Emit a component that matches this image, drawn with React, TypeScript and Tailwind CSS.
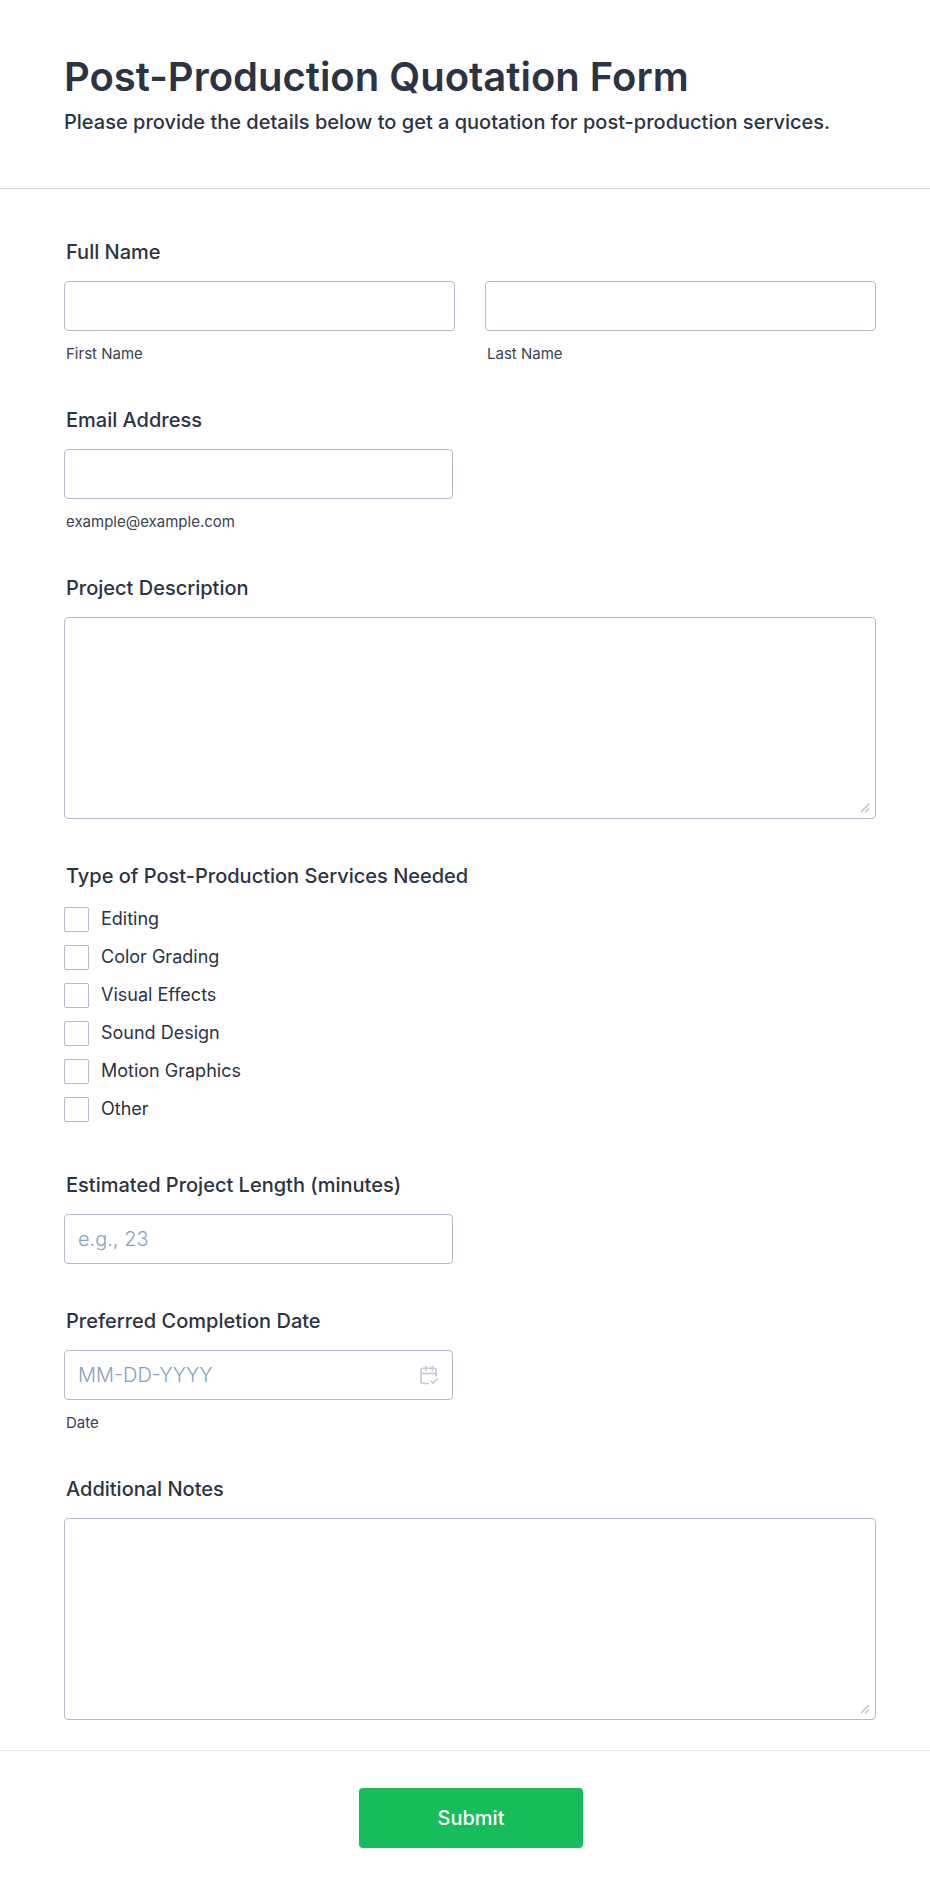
import React from "react";

const services = ["Editing", "Color Grading", "Visual Effects", "Sound Design", "Motion Graphics", "Other"];

const boxStyle = "block w-full rounded border border-[#b6bacb] bg-white px-[13px] text-xl font-light text-[#2c3345] placeholder:text-[#8a9fba]";
const labelStyle = "block px-0.5 text-xl leading-6 font-medium";
const subLabelStyle = "block px-0.5 mt-[14px] text-[15px] leading-[18px] text-[#3a4154]";

function CalendarIcon() {
	return (
		<svg width="20" height="20" viewBox="0 0 20 20" fill="none" stroke="#c5c8d8" strokeWidth="1.6" strokeLinecap="round" strokeLinejoin="round">
			<path d="M9.3 18.5H4a2 2 0 0 1-2-2V5.2a2 2 0 0 1 2-2h11.3a2 2 0 0 1 2 2V11" />
			<path d="M2 8.5h15.3M7 1.5v4M13.3 1.5v4" />
			<path d="M11.8 16l2.2 2.3 4.2-4.6" />
		</svg>
	);
}

// textarea with its own light resize grip over the browser's one
function TextArea({ id }: { id: string }) {
	return (
		<div className="relative">
			<textarea id={id} className={`${boxStyle} h-[202px] py-3 [&::-webkit-resizer]:appearance-none`} />
			<svg className="pointer-events-none absolute right-1.5 bottom-1.5" width="10" height="10" viewBox="0 0 10 10" fill="none" stroke="#b6bacb" strokeWidth="1.3">
				<path d="M1 9l8-8M5.2 9.2l3.8-3.8" />
			</svg>
		</div>
	);
}

function Field({ id, label, subLabel, children }: { id: string; label: string; subLabel?: string; children: React.ReactNode }) {
	return (
		<div>
			<label htmlFor={id} className={labelStyle}>
				{label}
			</label>
			<div className="mt-[17px]">{children}</div>
			{subLabel && (
				<label htmlFor={id} className={subLabelStyle}>
					{subLabel}
				</label>
			)}
		</div>
	);
}

export default function App() {
	const [selected, setSelected] = React.useState<string[]>([]);

	const toggle = (service: string) => {
		setSelected((prev) => (prev.includes(service) ? prev.filter((s) => s !== service) : [...prev, service]));
	};

	const handleSubmit = (e: React.SyntheticEvent) => {
		e.preventDefault();
	};

	return (
		<main className="w-full bg-white font-['Inter',sans-serif] text-[#2c3345]">
			<header className="border-b border-[#d9dbe6] pt-[53px] pr-[54px] pb-[54px] pl-16">
				<h1 className="text-[40px] leading-12 font-semibold">Post-Production Quotation Form</h1>
				<p className="mt-[9px] text-xl leading-6 font-medium">
					Please provide the details below to get a quotation for post-production services.
				</p>
			</header>

			<form onSubmit={handleSubmit}>
				<div className="flex flex-col gap-[45px] pt-[51px] pr-[54px] pb-[30px] pl-16">
					<fieldset>
						<legend className={labelStyle}>Full Name</legend>
						<div className="mt-[17px] grid grid-cols-2 gap-[30px]">
							<div>
								<input id="first" type="text" className={`${boxStyle} h-[50px]`} />
								<label htmlFor="first" className={subLabelStyle}>
									First Name
								</label>
							</div>
							<div>
								<input id="last" type="text" className={`${boxStyle} h-[50px]`} />
								<label htmlFor="last" className={subLabelStyle}>
									Last Name
								</label>
							</div>
						</div>
					</fieldset>

					<Field id="email" label="Email Address" subLabel="example@example.com">
						<input id="email" type="email" className={`${boxStyle} h-[50px] max-w-[389px]`} />
					</Field>

					<Field id="description" label="Project Description">
						<TextArea id="description" />
					</Field>

					<fieldset className="pb-1.5">
						<legend className={labelStyle}>Type of Post-Production Services Needed</legend>
						<div className="mt-[18px] flex flex-col items-start gap-3">
							{services.map((service) => (
								<label key={service} className="flex items-center gap-3 text-lg leading-[26px]">
									<input
										type="checkbox"
										checked={selected.includes(service)}
										onChange={() => toggle(service)}
										className="size-[25px] appearance-none rounded-xs border border-[#b6bacb] bg-white checked:bg-[#18bd5b]"
									/>
									{service}
								</label>
							))}
						</div>
					</fieldset>

					<Field id="length" label="Estimated Project Length (minutes)">
						<input id="length" type="text" placeholder="e.g., 23" className={`${boxStyle} h-[50px] max-w-[389px]`} />
					</Field>

					<Field id="date" label="Preferred Completion Date" subLabel="Date">
						<div className="relative max-w-[389px]">
							<input id="date" type="text" placeholder="MM-DD-YYYY" className={`${boxStyle} h-[50px]`} />
							<button type="button" aria-label="Choose date" className="absolute top-[15px] right-[14px]">
								<CalendarIcon />
							</button>
						</div>
					</Field>

					<Field id="notes" label="Additional Notes">
						<TextArea id="notes" />
					</Field>
				</div>

				<footer className="flex justify-center border-t border-[#e4e5ee] pt-[37px] pr-[52px] pb-[49px] pl-16">
					<button type="submit" className="h-[60px] w-56 rounded bg-[#18bd5b] text-xl font-medium text-white">
						Submit
					</button>
				</footer>
			</form>
		</main>
	);
}
